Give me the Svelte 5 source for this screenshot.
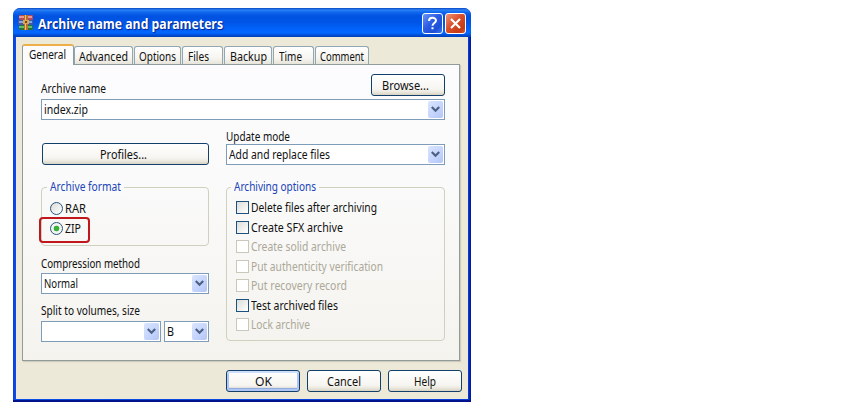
<script>
  const tabs = [
    { text: 'General', w: 37, box: 52 },
    { text: 'Advanced', w: 49, box: 59 },
    { text: 'Options', w: 37, box: 47 },
    { text: 'Files', w: 21, box: 41 },
    { text: 'Backup', w: 37, box: 48 },
    { text: 'Time', w: 23, box: 41 },
    { text: 'Comment', w: 44, box: 54 }
  ];
  const options = [
    { text: 'Delete files after archiving', w: 126 },
    { text: 'Create SFX archive', w: 92 },
    { text: 'Create solid archive', w: 95, off: true },
    { text: 'Put authenticity verification', w: 132, off: true },
    { text: 'Put recovery record', w: 96, off: true },
    { text: 'Test archived files', w: 87 },
    { text: 'Lock archive', w: 59, off: true }
  ];
  const buttons = [
    { text: 'OK', w: 17 },
    { text: 'Cancel', w: 34 },
    { text: 'Help', w: 22 }
  ];

  // Condenses the letters so that a label takes its nominal width.
  function fit(node, width) {
    const natural = node.getBoundingClientRect().width;
    node.style.transform = `scaleX(${(width / natural).toFixed(4)})`;
    node.style.marginRight = `${(width - natural).toFixed(2)}px`;
  }
</script>

{#snippet label(text, w)}<span class="label" use:fit={w}>{text}</span>{/snippet}

{#snippet combo(text, w, kind)}
  <div class="combo {kind}">
    <span class="value">{#if text}{@render label(text, w)}{/if}</span>
    <span class="drop">
      <svg width="9" height="7" viewBox="0 0 9 7"><path d="M0.8 1 L4.5 4.7 L8.2 1" fill="none" stroke="#4d6185" stroke-width="2.2" /></svg>
    </span>
  </div>
{/snippet}

<div class="page">
  <div class="window">
    <header class="titlebar">
      <svg class="logo" width="16" height="16" viewBox="0 0 16 16">
        <rect x="1" y="0" width="14" height="5" rx="1" fill="#b34b58" />
        <rect x="1" y="1" width="13" height="2" fill="#e99796" />
        <rect x="0" y="5" width="15" height="5" rx="1" fill="#4557a0" />
        <rect x="1" y="6" width="13" height="2" fill="#7fa9df" />
        <rect x="1" y="10" width="14" height="5" rx="1" fill="#23743c" />
        <rect x="1" y="11" width="13" height="2" fill="#63bd63" />
        <rect x="6" y="0" width="4" height="15" fill="#b8702c" />
        <rect x="7" y="0" width="1" height="15" fill="#f1c46b" />
        <rect x="5" y="5" width="6" height="4" fill="#dfa453" />
        <rect x="7" y="6" width="2" height="2" fill="#754819" />
      </svg>
      <h1>{@render label('Archive name and parameters', 185)}</h1>
      <span class="caption help">
        <svg width="19" height="19" viewBox="0 0 19 19"><path d="M6 7 C6 2.6 13 2.8 13 6.6 C13 9 9.5 9 9.5 11.7 M9.5 13.2 V15.3" fill="none" stroke="#fff" stroke-width="2" /></svg>
      </span>
      <span class="caption close">
        <svg width="19" height="19" viewBox="0 0 19 19"><path d="M5 5 L14 14 M14 5 L5 14" fill="none" stroke="#fff" stroke-width="2.2" /></svg>
      </span>
    </header>

    <div class="body">
      <nav>
        {#each tabs as tab, i}
          <div class="tab" class:active={i === 0} style:width="{tab.box}px">{@render label(tab.text, tab.w)}</div>
        {/each}
      </nav>

      <main>
        <div class="namerow">
          <div class="text">{@render label('Archive name', 65)}</div>
          <button class="small">{@render label('Browse...', 47)}</button>
        </div>
        {@render combo('index.zip', 44, 'full')}

        <div class="columns">
          <div class="left">
            <button class="wide">{@render label('Profiles...', 47)}</button>
            <section class="group format">
              <h2>{@render label('Archive format', 71)}</h2>
              <div class="radio"><i></i>{@render label('RAR', 21)}</div>
              <div class="radio on"><i></i>{@render label('ZIP', 16)}</div>
              <div class="mark"></div>
            </section>
            <div class="text method">{@render label('Compression method', 99)}</div>
            {@render combo('Normal', 34, 'full')}
            <div class="text split">{@render label('Split to volumes, size', 99)}</div>
            <div class="volumes">
              {@render combo('', 0, 'size')}
              {@render combo('B', 7, 'unit')}
            </div>
          </div>

          <div class="right">
            <div class="text">{@render label('Update mode', 64)}</div>
            {@render combo('Add and replace files', 101, 'full')}
            <section class="group opts">
              <h2>{@render label('Archiving options', 82)}</h2>
              {#each options as option}
                <div class="check" class:off={option.off}><i></i>{@render label(option.text, option.w)}</div>
              {/each}
            </section>
          </div>
        </div>
      </main>

      <footer>
        {#each buttons as button, i}
          <button class="small" class:primary={i === 0}>{@render label(button.text, button.w)}</button>
        {/each}
      </footer>
    </div>
  </div>
</div>

<style>
  :global(body) { background: #fff; }
  .page {
    box-sizing: border-box;
    width: 851px;
    height: 418px;
    padding: 8px 0 0 13px;
    overflow: hidden;
    background: #fff;
    font: 12px/14px "Noto Sans", "DejaVu Sans Condensed", sans-serif;
    color: #111;
  }
  .page * { box-sizing: border-box; }
  .label { display: inline-block; white-space: pre; transform-origin: 0 50%; }
  .window {
    width: 458px;
    height: 394px;
    display: flex;
    flex-direction: column;
    border-radius: 7px 7px 0 0;
    overflow: hidden;
    background: linear-gradient(90deg, #0a3fdc 0, #0a4fe8 3px, #0a3fd8 455px, #00138c 458px);
    box-shadow: inset 0 -2px 0 #00138c;
  }
  .titlebar {
    flex: none;
    height: 29px;
    display: flex;
    align-items: center;
    padding: 2px 5px 0 5px;
    border-radius: 7px 7px 0 0;
    background: linear-gradient(#0a46c4 0, #2b83f4 2px, #1268ef 4px, #0053e0 8px, #0054e6 14px, #0163fb 21px, #0366ff 25px, #0050d6 27px, #003cb6 29px);
  }
  .logo { flex: none; margin: -2px 4px 0 0; }
  h1 {
    flex: 1;
    margin: 0;
    font: bold 13.5px/18px "Open Sans", "Noto Sans", sans-serif;
    color: #fff;
    text-shadow: 1px 1px 1px #0a1f83;
  }
  .caption {
    width: 21px;
    height: 21px;
    margin-left: 2px;
    border: 1px solid #fff;
    border-radius: 3px;
    overflow: hidden;
  }
  .caption svg { display: block; }
  .help { background: linear-gradient(135deg, #6b95f5, #2c5ce4 45%, #1d4fd6 75%, #3a78f4); }
  .close { background: linear-gradient(135deg, #eb9478, #da4f2a 45%, #c43b14 80%, #d4582f); }
  .body {
    flex: 1;
    margin: 0 3px 3px;
    padding: 7px 0 0 6px;
    background: #ece9d8;
  }
  nav { display: flex; align-items: flex-end; gap: 1px; height: 20px; position: relative; z-index: 1; }
  .tab {
    flex: none;
    height: 18px;
    padding-top: 3px;
    text-align: center;
    border: 1px solid #91a7b4;
    border-bottom: 0;
    border-radius: 3px 3px 0 0;
    background: linear-gradient(#fff, #f6f5f0 65%, #e6e4da);
  }
  .tab:nth-child(4), .tab:nth-child(6) { text-align: left; padding-left: 5px; }
  .tab.active {
    height: 21px;
    margin: 0 -1px -1px 0;
    padding-top: 0;
    background: #fcfcfd;
    border-color: #919b9c;
    border-top: 2px solid #efaf48;
    padding-top: 2px;
  }
  main {
    width: 438px;
    height: 297px;
    padding: 9px 14px 0 18px;
    border: 1px solid #919b9c;
    box-shadow: 1px 1px 1px #cfccbc;
    background: linear-gradient(#fcfcfe, #fafafa 40%, #f4f3ee);
  }
  .namerow { display: flex; justify-content: space-between; height: 25px; }
  .namerow .text { padding-top: 8px; }
  .text { height: 14px; }
  button {
    display: flex;
    align-items: center;
    justify-content: center;
    height: 22px;
    padding: 1px 0 0;
    border: 1px solid #12406b;
    border-radius: 3px;
    color: #111;
    font: inherit;
    background: linear-gradient(#fff, #f6f5f1 70%, #ebe8de 85%, #d8d2c4);
  }
  button.small { width: 74px; }
  .namerow .small { padding: 2px 4px 0 0; }
  button.wide { width: 167px; margin-left: 1px; padding: 2px 3px 0 0; }
  button.primary { box-shadow: inset 0 2px 0 #cfdffb, inset 0 0 0 2px #aec6f1, inset 0 -3px 1px #89a6e0; }
  .combo {
    display: flex;
    align-items: center;
    justify-content: space-between;
    height: 21px;
    padding: 1px;
    border: 1px solid #7f9db9;
    background: #fff;
  }
  .combo.size { width: 120px; }
  .combo.unit { width: 45px; }
  .value { padding-left: 1px; }
  .drop {
    width: 15px;
    height: 17px;
    display: flex;
    align-items: center;
    justify-content: center;
    border-radius: 2px;
    background: linear-gradient(135deg, #dae5fd, #c3d3fc 60%, #b2c5f5);
  }
  .drop svg { display: block; }
  .columns { display: flex; justify-content: space-between; }
  .left { width: 168px; padding-top: 23px; }
  .right { width: 219px; padding-top: 10px; }
  .right > .text { height: 14px; }
  .group {
    position: relative;
    border: 1px solid #d0d0bf;
    border-radius: 4px;
  }
  h2 {
    position: absolute;
    top: -8px;
    left: 5px;
    margin: 0;
    padding: 0 3px;
    font: inherit;
    color: #2044b8;
    background: #fafafa;
  }
  .format { height: 59px; margin-top: 22px; padding: 13px 0 0 8px; }
  .radio { display: flex; align-items: center; height: 14px; margin-bottom: 6px; gap: 2px; }
  .radio .label, .check .label { padding-top: 1px; }
  .radio i {
    width: 13px;
    height: 13px;
    border: 1px solid #28567f;
    border-radius: 50%;
    background: linear-gradient(135deg, #dcdcd7, #fff);
  }
  .radio.on i { background: radial-gradient(circle, #35b435 0 2px, #35a435 2.5px, #f4f4f1 3.2px); }
  .mark {
    position: absolute;
    left: -3px;
    top: 29px;
    width: 51px;
    height: 26px;
    border: 2px solid #c0171c;
    border-radius: 4px;
  }
  .method { margin: 11px 0 2px; }
  .split { margin: 10px 0 3px; }
  .volumes { display: flex; justify-content: space-between; }
  .opts { height: 154px; margin-top: 22px; padding: 13px 0 0 9px; }
  .opts h2 { left: 4px; }
  .check { display: flex; align-items: center; height: 13px; margin-bottom: 6.5px; gap: 2px; }
  .check i {
    width: 13px;
    height: 13px;
    border: 1px solid #1c5180;
    background: linear-gradient(135deg, #dcdcd7, #fff);
  }
  .check.off { color: #aca899; }
  .check.off i { border-color: #cac8bb; background: #fff; }
  footer { display: flex; gap: 7px; padding: 9px 0 0 204px; }
</style>
